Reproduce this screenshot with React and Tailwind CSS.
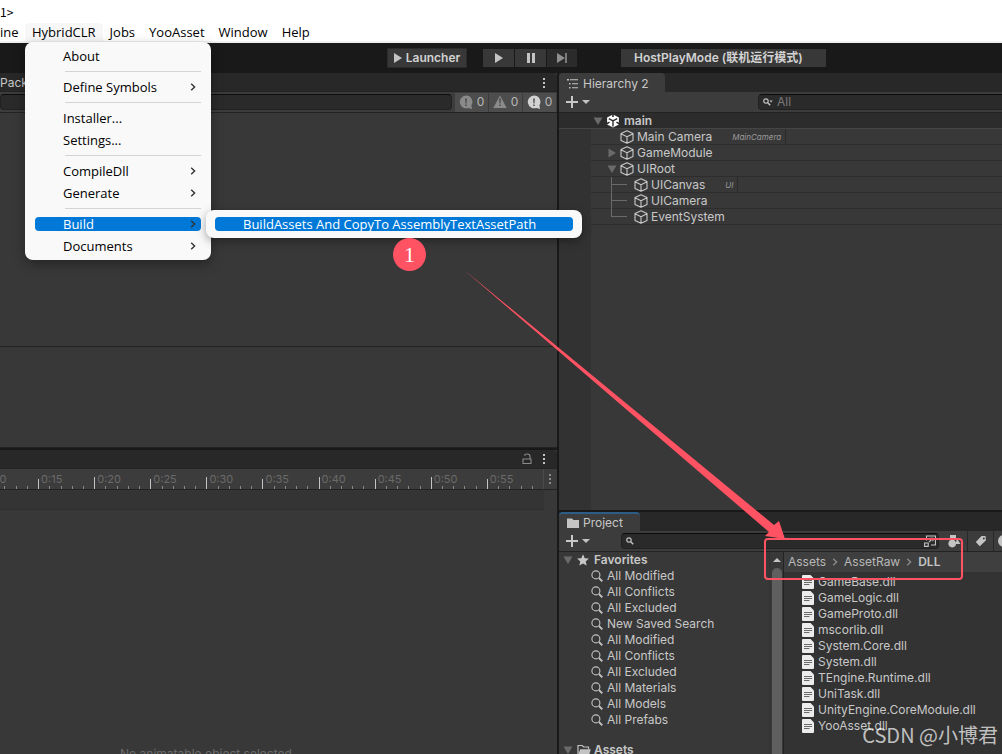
import React from "react";
import clsx from "clsx";

const menuItems = [
  { label: "About" },
  { separator: true },
  { label: "Define Symbols", children: true },
  { separator: true },
  { label: "Installer..." },
  { label: "Settings..." },
  { separator: true },
  { label: "CompileDll", children: true },
  { label: "Generate", children: true },
  { separator: true },
  { label: "Build", children: true, active: true, submenu: ["BuildAssets And CopyTo AssemblyTextAssetPath"] },
  { label: "Documents", children: true },
];

const sceneObjects = [
  { name: "Main Camera", depth: 1, tag: "MainCamera" },
  { name: "GameModule", depth: 1, fold: "closed" },
  { name: "UIRoot", depth: 1, fold: "open" },
  { name: "UICanvas", depth: 2, tag: "UI" },
  { name: "UICamera", depth: 2 },
  { name: "EventSystem", depth: 2, last: true },
];

const favorites = [
  "All Modified",
  "All Conflicts",
  "All Excluded",
  "New Saved Search",
  "All Modified",
  "All Conflicts",
  "All Excluded",
  "All Materials",
  "All Models",
  "All Prefabs",
];

const files = [
  "GameBase.dll",
  "GameLogic.dll",
  "GameProto.dll",
  "mscorlib.dll",
  "System.Core.dll",
  "System.dll",
  "TEngine.Runtime.dll",
  "UniTask.dll",
  "UnityEngine.CoreModule.dll",
  "YooAsset.dll",
];

const timeMarks = ["0:10", "0:15", "0:20", "0:25", "0:30", "0:35", "0:40", "0:45", "0:50", "0:55"];

/* ---------- icons ---------- */

function Triangle({ dir = "down", className }) {
  return (
    <svg viewBox="0 0 10 10" className={clsx("w-[10px] h-[10px] shrink-0", className)} fill="currentColor">
      {dir === "down" && <path d="M0.5 1.5h9L5 9z" />}
      {dir === "right" && <path d="M1.5 0.5v9L9 5z" />}
    </svg>
  );
}

function CaretDown() {
  return (
    <svg viewBox="0 0 8 4" className="w-2 h-1 shrink-0" fill="#c4c4c4">
      <path d="M0 0h8L4 4z" />
    </svg>
  );
}

function Plus() {
  return (
    <svg viewBox="0 0 12 12" className="w-3 h-3 shrink-0" fill="#c8c8c8">
      <path d="M5 0h2v5h5v2H7v5H5V7H0V5h5z" />
    </svg>
  );
}

function Kebab({ className }) {
  return (
    <svg viewBox="0 0 4 12" className={clsx("w-1 h-3 shrink-0", className)} fill="currentColor">
      <path d="M1 1h2v2H1zM1 5h2v2H1zM1 9h2v2H1z" />
    </svg>
  );
}

function Chevron({ className }) {
  return (
    <svg viewBox="0 0 6 8" className={clsx("w-[6px] h-2 shrink-0", className)} fill="none" stroke="currentColor" strokeWidth="1.4">
      <path d="M1.2 0.8L4.6 4L1.2 7.2" />
    </svg>
  );
}

function Cube() {
  return (
    <svg viewBox="0 0 14 14" className="w-[14px] h-[14px] shrink-0" fill="none" stroke="#c8c8c8" strokeWidth="1.1" strokeLinejoin="round">
      <path d="M7 0.8L13 3.6V10.4L7 13.2L1 10.4V3.6zM1 3.8L7 6.8L13 3.8M7 6.8V13" />
    </svg>
  );
}

function UnityLogo() {
  return (
    <svg viewBox="0 0 14 14" className="w-[14px] h-[14px] shrink-0">
      <path d="M7 0.4L12.9 3.6V10.4L7 13.6L1.1 10.4V3.6z" fill="#fff" />
      <path d="M7 6.9V12.4M7 6.9L2.8 4.6M7 6.9L11.2 4.6" stroke="#2b2b2b" strokeWidth="1.4" fill="none" />
      <path d="M6.2 0h1.6v2.9H6.2zM0.4 9l2.8-1.5l0.7 1.3l-2.8 1.6zM13.6 9l-2.8-1.5l-0.7 1.3l2.8 1.6z" fill="#2b2b2b" />
    </svg>
  );
}

function Lens() {
  return (
    <svg viewBox="0 0 12 12" className="w-3 h-3 shrink-0" fill="none" stroke="#c4c4c4">
      <circle cx="4.9" cy="4.9" r="4" strokeWidth="1.1" />
      <path d="M8 8L11.3 11.3" strokeWidth="1.8" />
    </svg>
  );
}

function SmallLens({ caret }) {
  return (
    <svg viewBox="0 0 10 8" className="w-[10px] h-2 shrink-0" fill="none" stroke="#c4c4c4">
      <circle cx="3" cy="3" r="2.2" strokeWidth="1.2" />
      <path d="M4.7 4.7L7.2 7.2" strokeWidth="1.5" />
      {caret && <path d="M6.5 2.5h3.2L8.1 4.4z" fill="#c4c4c4" stroke="none" />}
    </svg>
  );
}

function HierarchyIcon() {
  return (
    <svg viewBox="0 0 12 10" className="w-3 h-[10px] shrink-0" fill="#c4c4c4">
      <path d="M0 0h2v1.5H0zM3 0.3h8v1H3zM2 4h1.5v1.5H2zM5 4.3h6v1H5zM2 8h1.5v1.5H2zM5 8.3h6v1H5z" />
    </svg>
  );
}

function FileIcon() {
  return (
    <svg viewBox="0 0 12 14" className="w-3 h-[14px] shrink-0">
      <path d="M1 0H8.5L12 3.5V13a1 1 0 0 1-1 1H1a1 1 0 0 1-1-1V1a1 1 0 0 1 1-1z" fill="#ececec" />
      <path d="M2 5.5h8M2 7.5h8M2 9.5h5.5" stroke="#5a5a5a" strokeWidth="0.9" />
    </svg>
  );
}

function Folder() {
  return (
    <svg viewBox="0 0 12 10" className="w-3 h-[10px] shrink-0" fill="#c4c4c4">
      <path d="M0 0.5h5L6.5 2H12v8H0z" />
    </svg>
  );
}

function OpenFolder() {
  return (
    <svg viewBox="0 0 14 12" className="w-[14px] h-3 shrink-0">
      <path d="M1 10.5V1.5h4.2L6.6 3H11.5v2" fill="none" stroke="#c4c4c4" strokeWidth="1.2" />
      <path d="M3.2 5.2H13.8L12 11.5H0.9z" fill="#c4c4c4" />
    </svg>
  );
}

function Star() {
  return (
    <svg viewBox="0 0 12 12" className="w-3 h-3 shrink-0" fill="#c8c8c8">
      <path d="M6 0.3L7.7 4.2L11.9 4.6L8.7 7.4L9.7 11.6L6 9.4L2.3 11.6L3.3 7.4L0.1 4.6L4.3 4.2z" />
    </svg>
  );
}

function Lock() {
  return (
    <svg viewBox="0 0 10 12" className="w-[10px] h-3 shrink-0" fill="none" stroke="#8a8a8a" strokeWidth="1.1">
      <path d="M1 6h8v4.5H1zM8 6V3.2C8 1.4 6.8 1 5.2 1S2.6 1.5 2.6 2.8" />
    </svg>
  );
}

/* ---------- menu bar ---------- */

function MenuBarItem({ label, active, children }) {
  return (
    <div className="relative">
      <button className={clsx("h-[18px] px-[7px] leading-[18px] rounded-t-sm", active && "bg-[#f7f7f7]")}>{label}</button>
      {children}
    </div>
  );
}

function DropdownRow({ item }) {
  if (item.separator) {
    return (
      <div className="py-1 pl-[30px]">
        <div className="h-px bg-[#d4d4d4]" />
      </div>
    );
  }
  return (
    <div className="relative py-1">
      <button
        className={clsx(
          "h-[14px] w-full pl-7 pr-[5px] flex items-center justify-between rounded leading-[14px]",
          item.active ? "bg-[#0078d7] text-white" : "text-black"
        )}
      >
        <span>{item.label}</span>
        {item.children && <Chevron className="text-[#333]" />}
      </button>
      {item.submenu && (
        <div className="absolute -top-[3px] left-[171px] w-[376px] bg-[#f9f9f9] rounded-lg py-[7px] px-[9px] shadow-[0_3px_10px_rgba(0,0,0,0.35)]">
          {item.submenu.map((label) => (
            <button key={label} className="block h-[14px] w-full pl-7 text-left rounded bg-[#0078d7] text-white leading-[14px] whitespace-nowrap">
              {label}
            </button>
          ))}
        </div>
      )}
    </div>
  );
}

function MenuBar() {
  return (
    <header className="shrink-0 bg-white text-black border-b-2 border-[#f0f0f0] text-[13px] font-['Open_Sans','Noto_Sans',sans-serif]">
      <div className="h-[23px] leading-6 font-['Noto_Sans_CJK_SC',sans-serif] text-xs">1&gt;</div>
      <nav className="flex h-[18px]">
        <button className="w-[25px] pr-[7px] leading-[18px] text-right">ine</button>
        <MenuBarItem label="HybridCLR" active>
          <div className="absolute top-[19px] left-0 z-20 w-[186px] px-[10px] py-[3px] bg-[#f9f9f9] rounded-lg shadow-[0_4px_12px_rgba(0,0,0,0.35)]">
            {menuItems.map((item, i) => (
              <DropdownRow key={i} item={item} />
            ))}
          </div>
        </MenuBarItem>
        <MenuBarItem label="Jobs" />
        <MenuBarItem label="YooAsset" />
        <MenuBarItem label="Window" />
        <MenuBarItem label="Help" />
      </nav>
    </header>
  );
}

function PlayToolbar() {
  return (
    <div className="shrink-0 h-[30px] pl-[387px] flex items-center bg-[#191919] text-[#d2d2d2] font-semibold">
      <button className="h-5 w-20 flex items-center justify-center gap-1 bg-[#383838] border border-[#2a2a2a]">
        <svg viewBox="0 0 8 10" className="w-2 h-[10px]" fill="#c4c4c4"><path d="M0 0L8 5L0 10z" /></svg>
        Launcher
      </button>
      <div className="flex gap-px ml-4">
        <button aria-label="Play" className="w-[31px] h-[18px] flex items-center justify-center bg-[#383838]">
          <svg viewBox="0 0 8 10" className="w-2 h-[10px]" fill="#c4c4c4"><path d="M0 0L8 5L0 10z" /></svg>
        </button>
        <button aria-label="Pause" className="w-[31px] h-[18px] flex items-center justify-center bg-[#383838]">
          <svg viewBox="0 0 8 10" className="w-2 h-[10px]" fill="#c4c4c4"><path d="M0 0h3v10H0zM5 0h3v10H5z" /></svg>
        </button>
        <button aria-label="Step" className="w-[30px] h-[18px] flex items-center justify-center bg-[#2b2b2b]">
          <svg viewBox="0 0 10 10" className="w-[10px] h-[10px]" fill="#8f8f8f"><path d="M0 0L8 5L0 10zM8.2 0h1.6v10H8.2z" /></svg>
        </button>
      </div>
      <button className="ml-11 h-[18px] w-[205px] pl-[13px] text-left leading-[18px] bg-[#383838] font-['Inter','Noto_Sans_CJK_SC',sans-serif]">
        HostPlayMode (联机运行模式)
      </button>
    </div>
  );
}

/* ---------- left column ---------- */

function ConsoleCounter({ kind, bright }) {
  const fill = bright ? "#d2d2d2" : "#8a8a8a";
  return (
    <button className="w-[33px] h-[19px] flex items-center justify-center gap-1 bg-[#4d4d4d] text-[#b8b8b8]">
      <svg viewBox="0 0 14 14" className="w-[14px] h-[14px]">
        {kind === "warn" ? <path d="M7 0.5L13.7 13H0.3z" fill={fill} /> : <path d="M7 0.5a6.4 6.4 0 0 1 5.4 9.8L13 14L9.4 12.9A6.4 6.4 0 1 1 7 0.5z" fill={fill} />}
        <path d="M6.2 3.5h1.6L7.5 8.5h-1zM6.3 9.6h1.4V11H6.3z" fill="#444" />
      </svg>
      0
    </button>
  );
}

function ConsolePanel() {
  return (
    <section className="flex flex-col h-[375px] shrink-0 border-b border-[#232323]">
      <div className="h-[19px] pt-[2px] shrink-0 bg-[#282828] flex items-center justify-between pr-[11px] border-b border-[#232323] rounded-tr">
        <span>Pack</span>
        <Kebab className="text-[#c4c4c4]" />
      </div>
      <div className="h-[21px] pr-px shrink-0 flex items-center gap-px bg-[#3c3c3c] border-b border-[#232323]">
        <input aria-label="Search log" className="flex-1 min-w-0 h-4 mr-[2px] rounded bg-[#2a2a2a] border border-[#212121] border-t-[#0d0d0d] outline-none" />
        <ConsoleCounter kind="info" />
        <ConsoleCounter kind="warn" />
        <ConsoleCounter kind="error" bright />
      </div>
      <div className="flex-1 border-b border-[#232323]" />
      <div className="h-[100px] shrink-0" />
    </section>
  );
}

function TimeMark({ label, long }) {
  return (
    <div className="relative flex-1 h-full flex items-end">
      <span className="absolute left-[3px] top-1 text-[11px] leading-3 text-[#6a6a6a]">{label}</span>
      <span className={clsx("flex-1 border-l border-[#c4c4c4]", long ? "h-3" : "h-[10px]")} />
      <span className="flex-1 h-[3px] border-l border-[#8a8a8a]" />
      <span className="flex-1 h-[3px] border-l border-[#8a8a8a]" />
      <span className="flex-1 h-[3px] border-l border-[#8a8a8a]" />
      <span className="flex-1 h-[3px] border-l border-[#8a8a8a]" />
    </div>
  );
}

function AnimationPanel() {
  return (
    <section className="flex-1 min-h-0 flex flex-col overflow-hidden">
      <div className="h-[19px] shrink-0 flex items-center justify-end gap-[10px] pr-[11px] bg-[#282828] border-b border-[#232323] rounded-tr">
        <button aria-label="Lock"><Lock /></button>
        <button aria-label="Options"><Kebab className="text-[#c4c4c4]" /></button>
      </div>
      <div className="h-[21px] shrink-0 flex bg-[#3c3c3c] border-b border-[#232323]">
        <div className="flex-1 min-w-0 overflow-hidden border-r border-[#4a4a4a]">
          <div className="h-full flex -ml-[18px]">
            {timeMarks.map((label, i) => (
              <TimeMark key={label} label={label} long={i % 2 === 0} />
            ))}
          </div>
        </div>
        <div className="w-[13px] pl-1 flex items-center">
          <Kebab className="text-[#8a8a8a]" />
        </div>
      </div>
      <div className="h-5 shrink-0 mr-[13px] bg-[#343434] border-b border-[#303030]" />
      <div className="flex-1 flex flex-col justify-end">
        <p className="pl-[120px] h-2 text-[12px] leading-4 text-[#6a6a6a] whitespace-nowrap">No animatable object selected</p>
      </div>
    </section>
  );
}

/* ---------- right column ---------- */

function HierarchyRow({ name, depth, tag, fold, last }) {
  return (
    <li className="h-4 flex items-center ml-8 border-b border-[#2d2d2d] bg-[#383838]">
      {depth === 1 ? (
        <span className="w-[29px] pl-4 shrink-0">{fold && <Triangle dir={fold === "open" ? "down" : "right"} className="text-[#6a6a6a]" />}</span>
      ) : (
        <span className="w-[43px] h-full pl-5 pr-[7px] shrink-0 flex flex-col">
          <span className="h-2 shrink-0 border-l border-b border-[#6a6a6a]" />
          {!last && <span className="h-2 shrink-0 border-l border-[#6a6a6a]" />}
        </span>
      )}
      <Cube />
      <span className="ml-[3px] whitespace-nowrap">{name}</span>
      {tag && <span className="ml-5 pr-1 h-full text-[8px] leading-4 italic text-[#999] border-r border-[#2a2a2a]">{tag}</span>}
    </li>
  );
}

function HierarchyPanel() {
  return (
    <section className="flex flex-col h-[437px] shrink-0 overflow-hidden">
      <div className="h-[19px] shrink-0 flex bg-[#282828]">
        <button className="w-[106px] pl-2 pt-[3px] flex items-center gap-1 bg-[#3c3c3c] rounded-t whitespace-nowrap">
          <HierarchyIcon />
          Hierarchy 2
        </button>
      </div>
      <div className="h-[21px] shrink-0 flex items-center pl-[7px] bg-[#3c3c3c] border-b border-[#232323]">
        <button aria-label="Add object" className="flex items-center gap-1"><Plus /><CaretDown /></button>
        <label className="ml-auto w-[244px] h-4 pl-1 flex items-center gap-1 rounded-l bg-[#2a2a2a] border border-r-0 border-[#212121] border-t-[#0d0d0d]">
          <SmallLens caret />
          <input aria-label="Search hierarchy" placeholder="All" className="w-full bg-transparent outline-none placeholder:text-[#7a7a7a]" />
        </label>
      </div>
      <div className="h-4 shrink-0 pl-[34px] flex items-center bg-[#2c2c2c] border-b border-[#454545] font-semibold">
        <Triangle className="text-[#6a6a6a]" />
        <span className="ml-[3px] mr-1"><UnityLogo /></span>
        main
      </div>
      <div className="flex-1 bg-[linear-gradient(to_right,#323232_32px,#383838_32px)]">
        <ul>
          {sceneObjects.map((obj) => (
            <HierarchyRow key={obj.name} {...obj} />
          ))}
        </ul>
      </div>
    </section>
  );
}

function ProjectToolbar() {
  return (
    <div className="h-[21px] shrink-0 flex items-center pl-[7px] bg-[#3c3c3c] border-b border-[#232323]">
      <button aria-label="Create asset" className="flex items-center gap-1"><Plus /><CaretDown /></button>
      <label className="ml-[31px] flex-1 min-w-0 h-4 pl-1 pr-[2px] flex items-center gap-1 rounded bg-[#2a2a2a] border border-[#212121] border-t-[#0d0d0d]">
        <SmallLens />
        <input aria-label="Search project" className="flex-1 min-w-0 bg-transparent outline-none" />
        <svg viewBox="0 0 12 12" className="w-3 h-3 shrink-0" fill="none" stroke="#c4c4c4" strokeWidth="1.1">
          <path d="M2.5 5.5V1h9v9H7M0.6 8h3.6v3.4H0.6zM5 7L8.8 3.4M6 3.4h2.9v2.8" />
        </svg>
      </label>
      <div className="flex h-full gap-px ml-[3px] bg-[#282828]">
        <button aria-label="Filter by type" className="w-[25px] flex items-center justify-center bg-[#3c3c3c]">
          <svg viewBox="0 0 13 13" className="w-[13px] h-[13px]" fill="#c4c4c4">
            <path d="M2 0h6v4H2zM9 3.5L12.5 9H7.5z" /><circle cx="4.2" cy="8.6" r="3.8" />
          </svg>
        </button>
        <button aria-label="Filter by label" className="w-[25px] flex items-center justify-center bg-[#3c3c3c]">
          <svg viewBox="0 0 12 12" className="w-3 h-3" fill="#c4c4c4">
            <path fillRule="evenodd" d="M6.5 1L10.5 1L11 5.2L4.8 11.2L0.8 7zM8.8 2.4a1 1 0 1 0 0.1 2a1 1 0 0 0-0.1-2z" />
          </svg>
        </button>
        <button aria-label="Import log" className="w-2 pl-1 flex items-center overflow-hidden bg-[#3c3c3c]">
          <svg viewBox="0 0 12 12" className="w-3 h-3 shrink-0" fill="#c4c4c4"><circle cx="6" cy="6" r="6" /></svg>
        </button>
      </div>
    </div>
  );
}

function ProjectPanel() {
  return (
    <section className="flex-1 min-h-0 flex flex-col overflow-hidden border-t-2 border-[#191919]">
      <div className="h-[19px] shrink-0 flex bg-[#282828]">
        <button className="w-[81px] pl-2 flex items-center gap-1 bg-[#3c3c3c] border-t-2 border-[#2c5d87] rounded-t-sm">
          <Folder />
          Project
        </button>
      </div>
      <ProjectToolbar />
      <div className="flex-1 min-h-0 flex">
        <div className="w-[211px] shrink-0 overflow-hidden border-r border-[#333]">
          <div className="h-4 pl-1 flex items-center font-semibold">
            <Triangle className="text-[#6a6a6a]" />
            <span className="ml-1 mr-[5px]"><Star /></span>
            Favorites
          </div>
          <ul>
            {favorites.map((name, i) => (
              <li key={i} className="h-4 pl-8 flex items-center gap-1"><Lens />{name}</li>
            ))}
          </ul>
          <div className="h-4 mt-[14px] pl-1 flex items-center font-semibold">
            <Triangle className="text-[#6a6a6a]" />
            <span className="ml-1 mr-[3px]"><OpenFolder /></span>
            Assets
          </div>
        </div>
        <div className="w-[14px] shrink-0 flex flex-col items-center border-r border-[#232323]">
          <svg viewBox="0 0 8 4" className="w-2 h-1 mt-1.5 mb-1.5 shrink-0" fill="#c4c4c4"><path d="M4 0L8 4H0z" /></svg>
          <div className="w-[10px] flex-1 rounded-t-full bg-[#5f5f5f]" />
        </div>
        <div className="flex-1 min-w-0 bg-[#333]">
          <nav className="h-5 pl-1 flex items-center bg-[#3f3f3f] text-[#b8b8b8]">
            <a href="#assets">Assets</a>
            <Chevron className="mx-[6px] text-[#8a8a8a]" />
            <a href="#assetraw">AssetRaw</a>
            <Chevron className="mx-[6px] text-[#8a8a8a]" />
            <a href="#dll" className="font-semibold text-[#c4c4c4]">DLL</a>
          </nav>
          <ul className="pt-[2px]">
            {files.map((file) => (
              <li key={file} className="h-4 pl-[18px] flex items-center gap-1 whitespace-nowrap"><FileIcon />{file}</li>
            ))}
          </ul>
        </div>
      </div>
    </section>
  );
}

/* ---------- tutorial marks drawn over the editor ---------- */

function Annotations() {
  return (
    <div className="absolute inset-0 z-30 pointer-events-none overflow-hidden">
      <div className="absolute left-[393px] top-[238px] w-[33px] h-[33px] rounded-full bg-[#ff5263] text-white text-[22px] leading-[33px] text-center font-['Liberation_Serif',serif]">
        1
      </div>
      <svg className="absolute inset-0 w-full h-full" fill="#ff5263">
        <path d="M463 269L774 525L779 521L785 539L765 536L769 532z" />
      </svg>
      <div className="absolute left-[764px] top-[538px] w-[199px] h-[42px] rounded border-2 border-[#ff5263]" />
      <p className="absolute right-1 bottom-[5px] text-[20px] leading-7 whitespace-nowrap text-white/70 font-['Noto_Sans_CJK_SC',sans-serif]">
        CSDN @小博君
      </p>
    </div>
  );
}

export default function App() {
  return (
    <div className="relative h-screen flex flex-col overflow-hidden bg-[#191919] text-[#c8c8c8] text-[12px] leading-4 font-['Inter',sans-serif]">
      <MenuBar />
      <PlayToolbar />
      <main className="flex-1 min-h-0 grid grid-cols-[557fr_443fr] gap-x-[2px]">
        <div className="min-w-0 min-h-0 flex flex-col gap-[2px] *:bg-[#383838]">
          <ConsolePanel />
          <AnimationPanel />
        </div>
        <div className="min-w-0 min-h-0 flex flex-col *:bg-[#383838]">
          <HierarchyPanel />
          <ProjectPanel />
        </div>
      </main>
      <Annotations />
    </div>
  );
}
